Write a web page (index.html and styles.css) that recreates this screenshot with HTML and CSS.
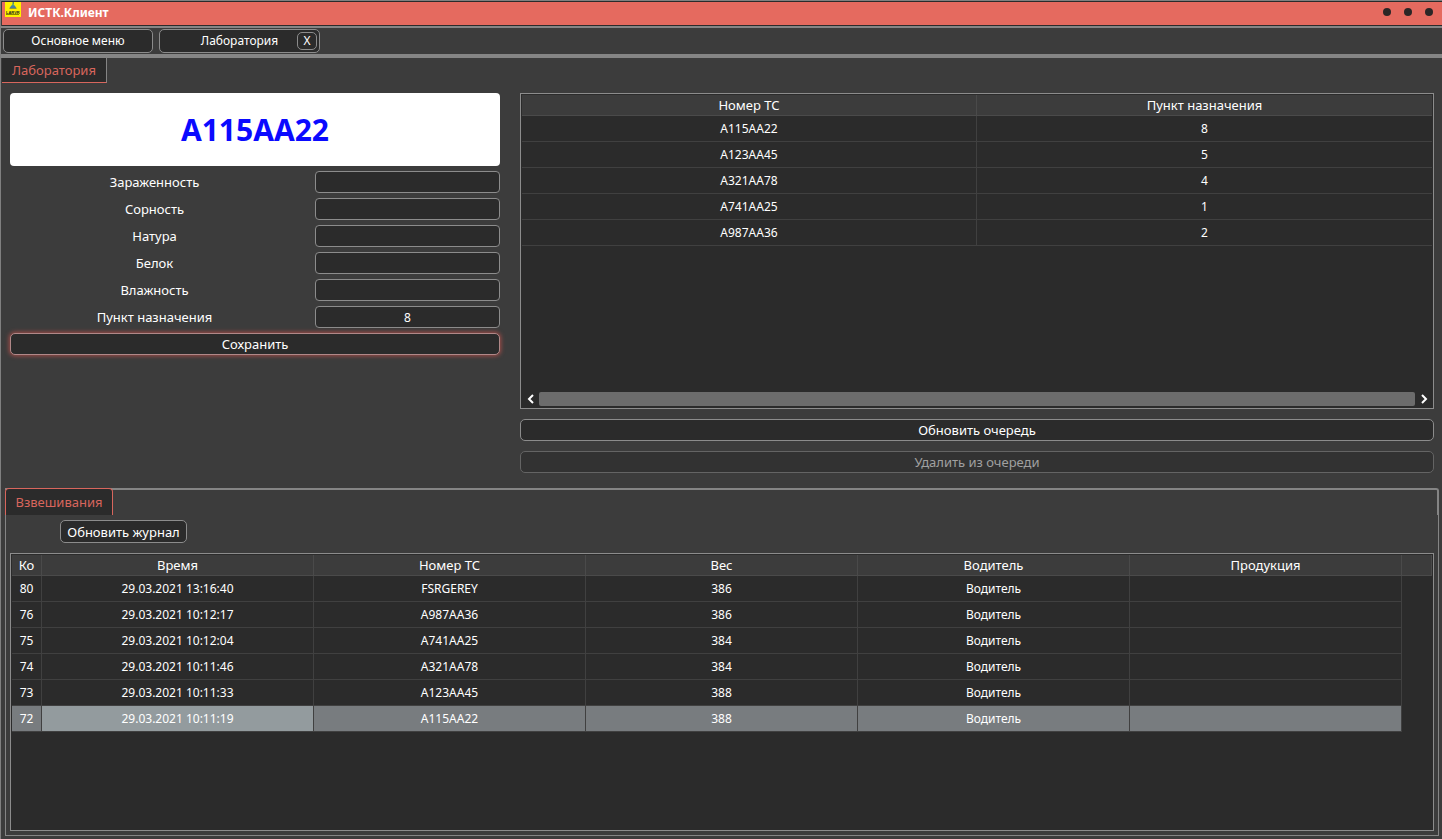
FILE: index.html
```html
<!DOCTYPE html>
<html lang="ru">
<head>
<meta charset="utf-8">
<title>ИСТК.Клиент</title>
<link rel="stylesheet" href="styles.css">
</head>
<body>
<div class="window">
  <header class="titlebar">
    <svg class="logo" viewBox="0 0 16 15" aria-hidden="true">
      <rect width="16" height="15" fill="#fff200"/>
      <path d="M7.500 0h1.500v2H7.500z" fill="#5f8f6a"/>
      <path d="M8 1.500L10 4H6z" fill="#4a9a8c"/>
      <path d="M6 4h4l1.500 2h-7z" fill="#4a7fa0"/>
      <path d="M4.500 6.500h7" stroke="#8d9a3a"/>
      <text x="1" y="12" class="logo-text">LARVR</text>
      <path d="M1 12.500h13" stroke="#8a8500"/>
    </svg>
    <h1 class="title">ИСТК.Клиент</h1>
    <div class="controls">
      <button class="dot" aria-label="Свернуть"></button>
      <button class="dot" aria-label="Развернуть"></button>
      <button class="dot" aria-label="Закрыть"></button>
    </div>
  </header>

  <nav class="toolbar">
    <button class="btn menu-btn">Основное меню</button>
    <div class="btn page-btn">
      <button class="page-name">Лаборатория</button>
      <button class="close" aria-label="Закрыть вкладку">X</button>
    </div>
  </nav>

  <div class="tabs"><button class="tab tab-main">Лаборатория</button></div>

  <main class="lab">
    <form class="form">
      <output class="plate">A115AA22</output>
      <div class="field"><label for="infest">Зараженность</label><input id="infest" type="text"></div>
      <div class="field"><label for="weed">Сорность</label><input id="weed" type="text"></div>
      <div class="field"><label for="nature">Натура</label><input id="nature" type="text"></div>
      <div class="field"><label for="protein">Белок</label><input id="protein" type="text"></div>
      <div class="field"><label for="moist">Влажность</label><input id="moist" type="text"></div>
      <div class="field"><label for="dest">Пункт назначения</label><input id="dest" type="text" value="8"></div>
      <button class="btn action save" type="button">Сохранить</button>
    </form>

    <section class="queue">
      <div class="grid-box queue-box">
        <table>
          <thead><tr><th>Номер ТС</th><th>Пункт назначения</th></tr></thead>
          <tbody>
            <tr><td>A115AA22</td><td>8</td></tr>
            <tr><td>A123AA45</td><td>5</td></tr>
            <tr><td>A321AA78</td><td>4</td></tr>
            <tr><td>A741AA25</td><td>1</td></tr>
            <tr><td>A987AA36</td><td>2</td></tr>
          </tbody>
        </table>
        <div class="scroll">
          <button class="arrow" aria-label="Влево"><svg viewBox="0 0 8 10"><path d="M6 1L2 5l4 4"/></svg></button>
          <div class="thumb"></div>
          <button class="arrow" aria-label="Вправо"><svg viewBox="0 0 8 10"><path d="M2 1l4 4-4 4"/></svg></button>
        </div>
      </div>
      <button class="btn action">Обновить очередь</button>
      <button class="btn action" disabled>Удалить из очереди</button>
    </section>
  </main>

  <section class="journal">
    <div class="journal-tabs"><button class="tab tab-journal">Взвешивания</button></div>
    <div class="journal-body">
      <button class="btn refresh">Обновить журнал</button>
      <div class="grid-box journal-box">
        <table class="log">
          <colgroup><col class="c-code"><col><col><col><col><col><col class="c-end"></colgroup>
          <thead><tr><th>Ко</th><th>Время</th><th>Номер ТС</th><th>Вес</th><th>Водитель</th><th>Продукция</th><th></th></tr></thead>
          <tbody>
            <tr><td>80</td><td>29.03.2021 13:16:40</td><td>FSRGEREY</td><td>386</td><td>Водитель</td><td></td><td></td></tr>
            <tr><td>76</td><td>29.03.2021 10:12:17</td><td>A987AA36</td><td>386</td><td>Водитель</td><td></td><td></td></tr>
            <tr><td>75</td><td>29.03.2021 10:12:04</td><td>A741AA25</td><td>384</td><td>Водитель</td><td></td><td></td></tr>
            <tr><td>74</td><td>29.03.2021 10:11:46</td><td>A321AA78</td><td>384</td><td>Водитель</td><td></td><td></td></tr>
            <tr><td>73</td><td>29.03.2021 10:11:33</td><td>A123AA45</td><td>388</td><td>Водитель</td><td></td><td></td></tr>
            <tr class="selected"><td>72</td><td class="current">29.03.2021 10:11:19</td><td>A115AA22</td><td>388</td><td>Водитель</td><td></td><td></td></tr>
          </tbody>
        </table>
      </div>
    </div>
  </section>
</div>
</body>
</html>
```
FILE: styles.css
```css
* { box-sizing: border-box; }

body {
  margin: 0;
  background: #3c3c3c;
  color: #fff;
  font: 12px/16px "Noto Sans", "Open Sans", sans-serif;
}

button, input { font: inherit; color: inherit; margin: 0; }
button { padding: 0; border: 0; background: none; }

.window {
  min-height: 100vh;
  display: flex;
  flex-direction: column;
  border-left: 1px solid #808080;
  border-top: 1px solid #808080;
}

.titlebar {
  display: flex;
  align-items: flex-start;
  height: 25px;
  margin-left: 1px;
  padding: 0 9px 0 3px;
  background: #e56a5f;
  border-top: 1px solid #2b2b2b;
  border-bottom: 1px solid #2b2b2b;
}
.logo { width: 16px; height: 15px; }
.logo-text { font: bold 4px "Liberation Sans", sans-serif; fill: #222; }
.title { margin: 3px 0 0 7px; font-size: 12px; line-height: 16px; font-weight: 700; }
.controls { display: flex; gap: 13px; margin: 6px 0 0 auto; }
.dot { width: 8px; height: 8px; border-radius: 50%; background: #2b2626; }

.toolbar {
  display: flex;
  gap: 6px;
  height: 32px;
  padding: 1px 2px;
  border-top: 2px solid #858585;
  border-bottom: 4px solid #858585;
}

.btn {
  height: 22px;
  background: #2b2b2b;
  border: 1px solid #8c8c8c;
  border-radius: 5px;
}
.btn:disabled { background: #323232; border-color: #646464; color: #a0a0a0; }
.action, .refresh, .tab, .field, th { font-size: 13px; }
.menu-btn { width: 150px; height: 24px; }
.page-btn {
  display: flex;
  align-items: center;
  width: 161px;
  height: 24px;
  padding-right: 2px;
}
.page-name { flex: 1; padding-left: 22px; }
.close {
  width: 20px;
  height: 18px;
  border: 1px solid #8c8c8c;
  border-radius: 5px;
}

.tab { background: #2b2b2b; color: #d8665d; }
.tabs { display: flex; padding-left: 1px; }
.tab-main {
  width: 105px;
  height: 25px;
  border-right: 1px solid #858585;
  border-bottom: 1px solid #d8665d;
}

.lab {
  display: grid;
  grid-template-columns: 490fr 914fr;
  gap: 20px;
  padding: 10px 8px 0 9px;
}
.form { display: flex; flex-direction: column; gap: 5px; }
.plate {
  display: flex;
  align-items: center;
  justify-content: center;
  height: 73px;
  border-radius: 4px;
  background: #fff;
  color: #0a0aff;
  font-size: 30px;
  line-height: 40px;
  font-weight: 700;
}
.field {
  display: grid;
  grid-template-columns: 289fr 185fr;
  gap: 16px;
  align-items: center;
  text-align: center;
}
.field input {
  width: 100%;
  height: 22px;
  padding: 0 4px;
  text-align: center;
  background: #2b2b2b;
  border: 1px solid #8c8c8c;
  border-radius: 4px;
  font-size: 12px;
}
.save { border-color: #b08888; box-shadow: 0 0 4px 1px #a04c48; }

.queue { display: flex; flex-direction: column; gap: 10px; }

.grid-box {
  display: flex;
  flex-direction: column;
  padding: 1px;
  background: #2b2b2b;
  border: 1px solid #8c8c8c;
}
.queue-box { height: 316px; }

table { width: 100%; table-layout: fixed; border-collapse: separate; border-spacing: 0; }
th, td {
  height: 26px;
  padding: 0;
  text-align: center;
  font-weight: 400;
  border-right: 1px solid #404040;
  border-bottom: 1px solid #404040;
}
th { height: 21px; background: #3c3c3c; border-color: #4a4a4a; }
.queue tr > :last-child { border-right: 0; }

.scroll { display: flex; align-items: center; margin: auto 0 1px; }
.arrow { display: flex; justify-content: center; width: 17px; height: 14px; align-items: center; }
.arrow svg { width: 8px; height: 10px; fill: none; stroke: #fff; stroke-width: 2; }
.thumb { flex: 1; height: 14px; border-radius: 2px; background: #6c6c6c; }

.journal {
  flex: 1;
  display: flex;
  flex-direction: column;
  margin: 15px 3px 3px 4px;
}
.journal-tabs {
  height: 27px;
  border-top: 2px solid #858585;
  border-right: 2px solid #858585;
  border-top-right-radius: 3px;
}
.tab-journal {
  display: block;
  width: 108px;
  height: 27px;
  margin-top: -2px;
  border: 1px solid #d8665d;
  border-bottom: 0;
  border-radius: 4px 4px 0 0;
}
.journal-body {
  flex: 1;
  display: flex;
  flex-direction: column;
  padding: 5px 4px 4px;
  border: 1px solid #858585;
  border-top: 0;
}
.refresh { width: 127px; height: 23px; margin: 0 0 10px 50px; }
.journal-box { flex: 1; }

.c-code { width: 30px; }
.c-end { width: 30px; }
.log td:last-child { border: 0; }
.selected td:not(:last-child) { background: #787c7f; }
.selected td.current { background: #939b9e; }
```
